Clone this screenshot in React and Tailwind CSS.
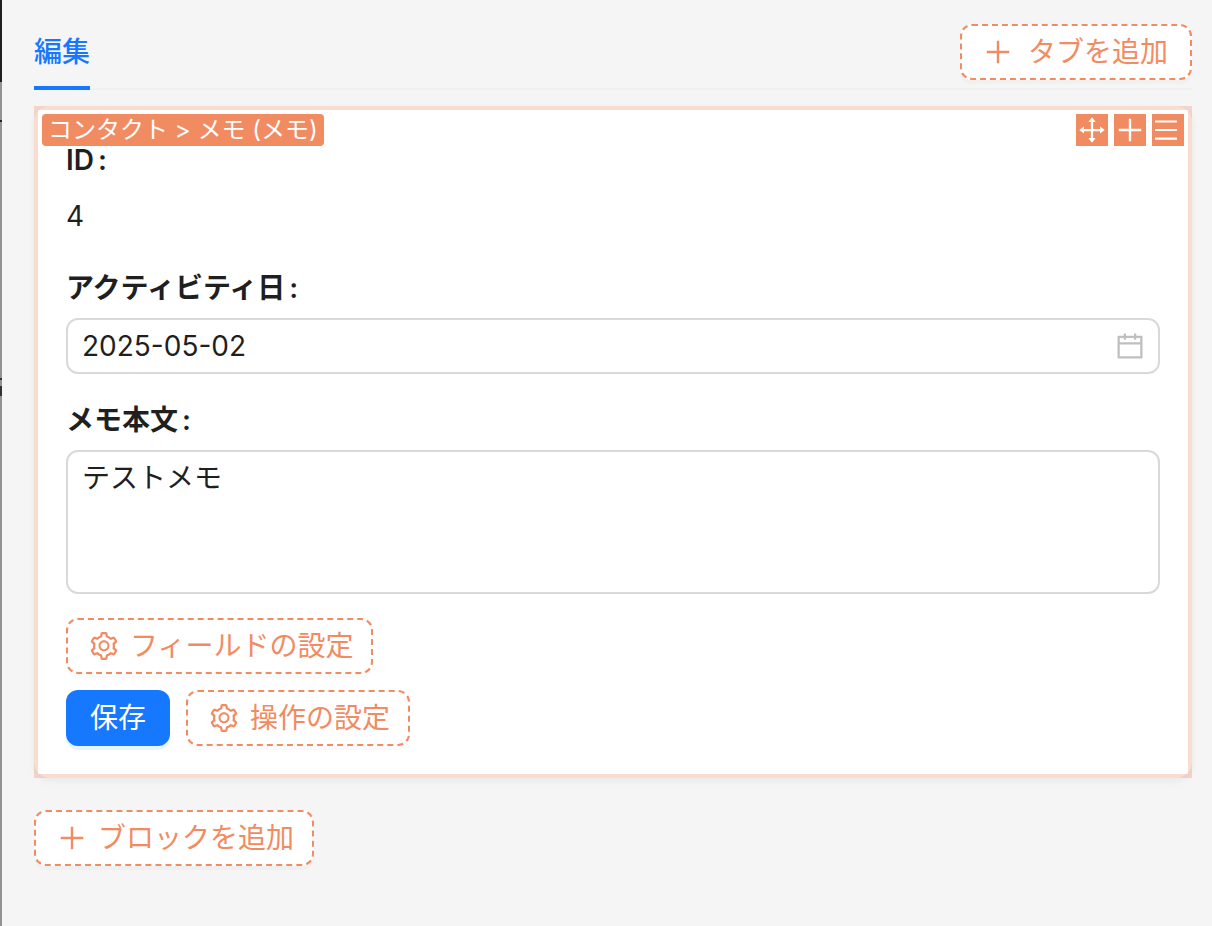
import { useState } from "react";
import {
  AiOutlineCalendar,
  AiOutlineDrag,
  AiOutlineMenu,
  AiOutlinePlus,
  AiOutlineSetting,
} from "react-icons/ai";

function DashedButton({ icon: Icon, wide, children }) {
  return (
    <button
      type="button"
      className={`flex h-14 items-center rounded-xl border-2 border-dashed border-[#f18b62] bg-white pl-5 text-[#f18b62] shadow-[0_4px_0_rgba(0,0,0,0.02)] ${
        wide ? "gap-3.5 pr-[22px]" : "gap-2.5 pr-[18px]"
      }`}
    >
      <Icon className="size-8" />
      <span>{children}</span>
    </button>
  );
}

function ToolButton({ icon: Icon, label, small }) {
  return (
    <button type="button" aria-label={label} className="flex size-8 items-center bg-[#f18b62] text-white">
      <Icon className={small ? "size-7" : "size-8"} />
    </button>
  );
}

function Label({ htmlFor, children }) {
  return (
    <label htmlFor={htmlFor} className="block h-11 font-semibold">
      {children}
      <span className="ml-1">:</span>
    </label>
  );
}

// Sliver of the page that stays visible behind the drawer
function PageEdge() {
  return (
    <div className="flex w-0.5 shrink-0 flex-col bg-[#929292]">
      <div className="h-[82px] bg-[#1f1f1f]" />
      <div className="mt-[38px] h-0.5 bg-[#222222]" />
      <div className="mt-64 h-0.5 bg-[#333333]" />
      <div className="mt-1.5 h-2.5 bg-[#333333]" />
    </div>
  );
}

export default function App() {
  const [date, setDate] = useState("2025-05-02");
  const [memo, setMemo] = useState("テストメモ");

  return (
    <div className="flex min-h-screen bg-[#f5f5f5] font-['Inter','Noto_Sans_CJK_JP',sans-serif] text-[28px] leading-11 text-[#1f1f1f]">
      <PageEdge />
      <main className="min-w-0 flex-1 pt-6 pr-5 pb-8 pl-8">
        <div className="flex items-start justify-between shadow-[inset_0_-2px_0_#f0f0f0]">
          <button type="button" role="tab" aria-selected="true" className="h-[66px] border-b-4 border-[#1677ff] pb-1.5 font-medium text-[#1677ff]">
            編集
          </button>
          <DashedButton icon={AiOutlinePlus} wide>タブを追加</DashedButton>
        </div>

        <section className="relative mt-4 rounded-2xl bg-white p-8 shadow-[0_2px_6px_rgba(0,0,0,0.03),0_4px_12px_rgba(0,0,0,0.03)]">
          <div className="pointer-events-none absolute inset-0 border-4 border-[#f18b62]/30" />
          <span className="absolute top-2 left-2 rounded bg-[#f18b62] px-1.5 text-2xl leading-8 text-white">
            コンタクト &gt; メモ (メモ)
          </span>
          <div className="absolute top-2 right-2 flex gap-1.5">
            <ToolButton icon={AiOutlineDrag} label="移動" />
            <ToolButton icon={AiOutlinePlus} label="追加" />
            <ToolButton icon={AiOutlineMenu} label="メニュー" small />
          </div>

          <form className="flex flex-col gap-6" onSubmit={(e) => e.preventDefault()}>
            <div>
              <Label htmlFor="record-id">ID</Label>
              <output id="record-id" className="mt-2 block h-[52px] pt-1">4</output>
            </div>

            <div>
              <Label htmlFor="activity-date">アクティビティ日</Label>
              <div className="mt-2 flex h-14 items-center rounded-xl border-2 border-[#d9d9d9] bg-white pr-3 pl-3.5">
                <input
                  id="activity-date"
                  type="text"
                  value={date}
                  onChange={(e) => setDate(e.target.value)}
                  className="min-w-0 flex-1 outline-none"
                />
                <AiOutlineCalendar className="size-8 text-[#bfbfbf]" />
              </div>
            </div>

            <div>
              <Label htmlFor="memo-body">メモ本文</Label>
              <textarea
                id="memo-body"
                value={memo}
                onChange={(e) => setMemo(e.target.value)}
                className="mt-2 block h-36 w-full resize-none rounded-xl border-2 border-[#d9d9d9] bg-white px-3.5 py-1 outline-none"
              />
            </div>

            <div className="flex flex-col items-start gap-4">
              <DashedButton icon={AiOutlineSetting}>フィールドの設定</DashedButton>
              <div className="flex gap-4">
                <button type="submit" className="h-14 rounded-xl bg-[#1677ff] px-6 text-white shadow-[0_4px_0_rgba(5,145,255,0.1)]">
                  保存
                </button>
                <DashedButton icon={AiOutlineSetting}>操作の設定</DashedButton>
              </div>
            </div>
          </form>
        </section>

        <div className="mt-8 flex">
          <DashedButton icon={AiOutlinePlus}>ブロックを追加</DashedButton>
        </div>
      </main>
    </div>
  );
}
